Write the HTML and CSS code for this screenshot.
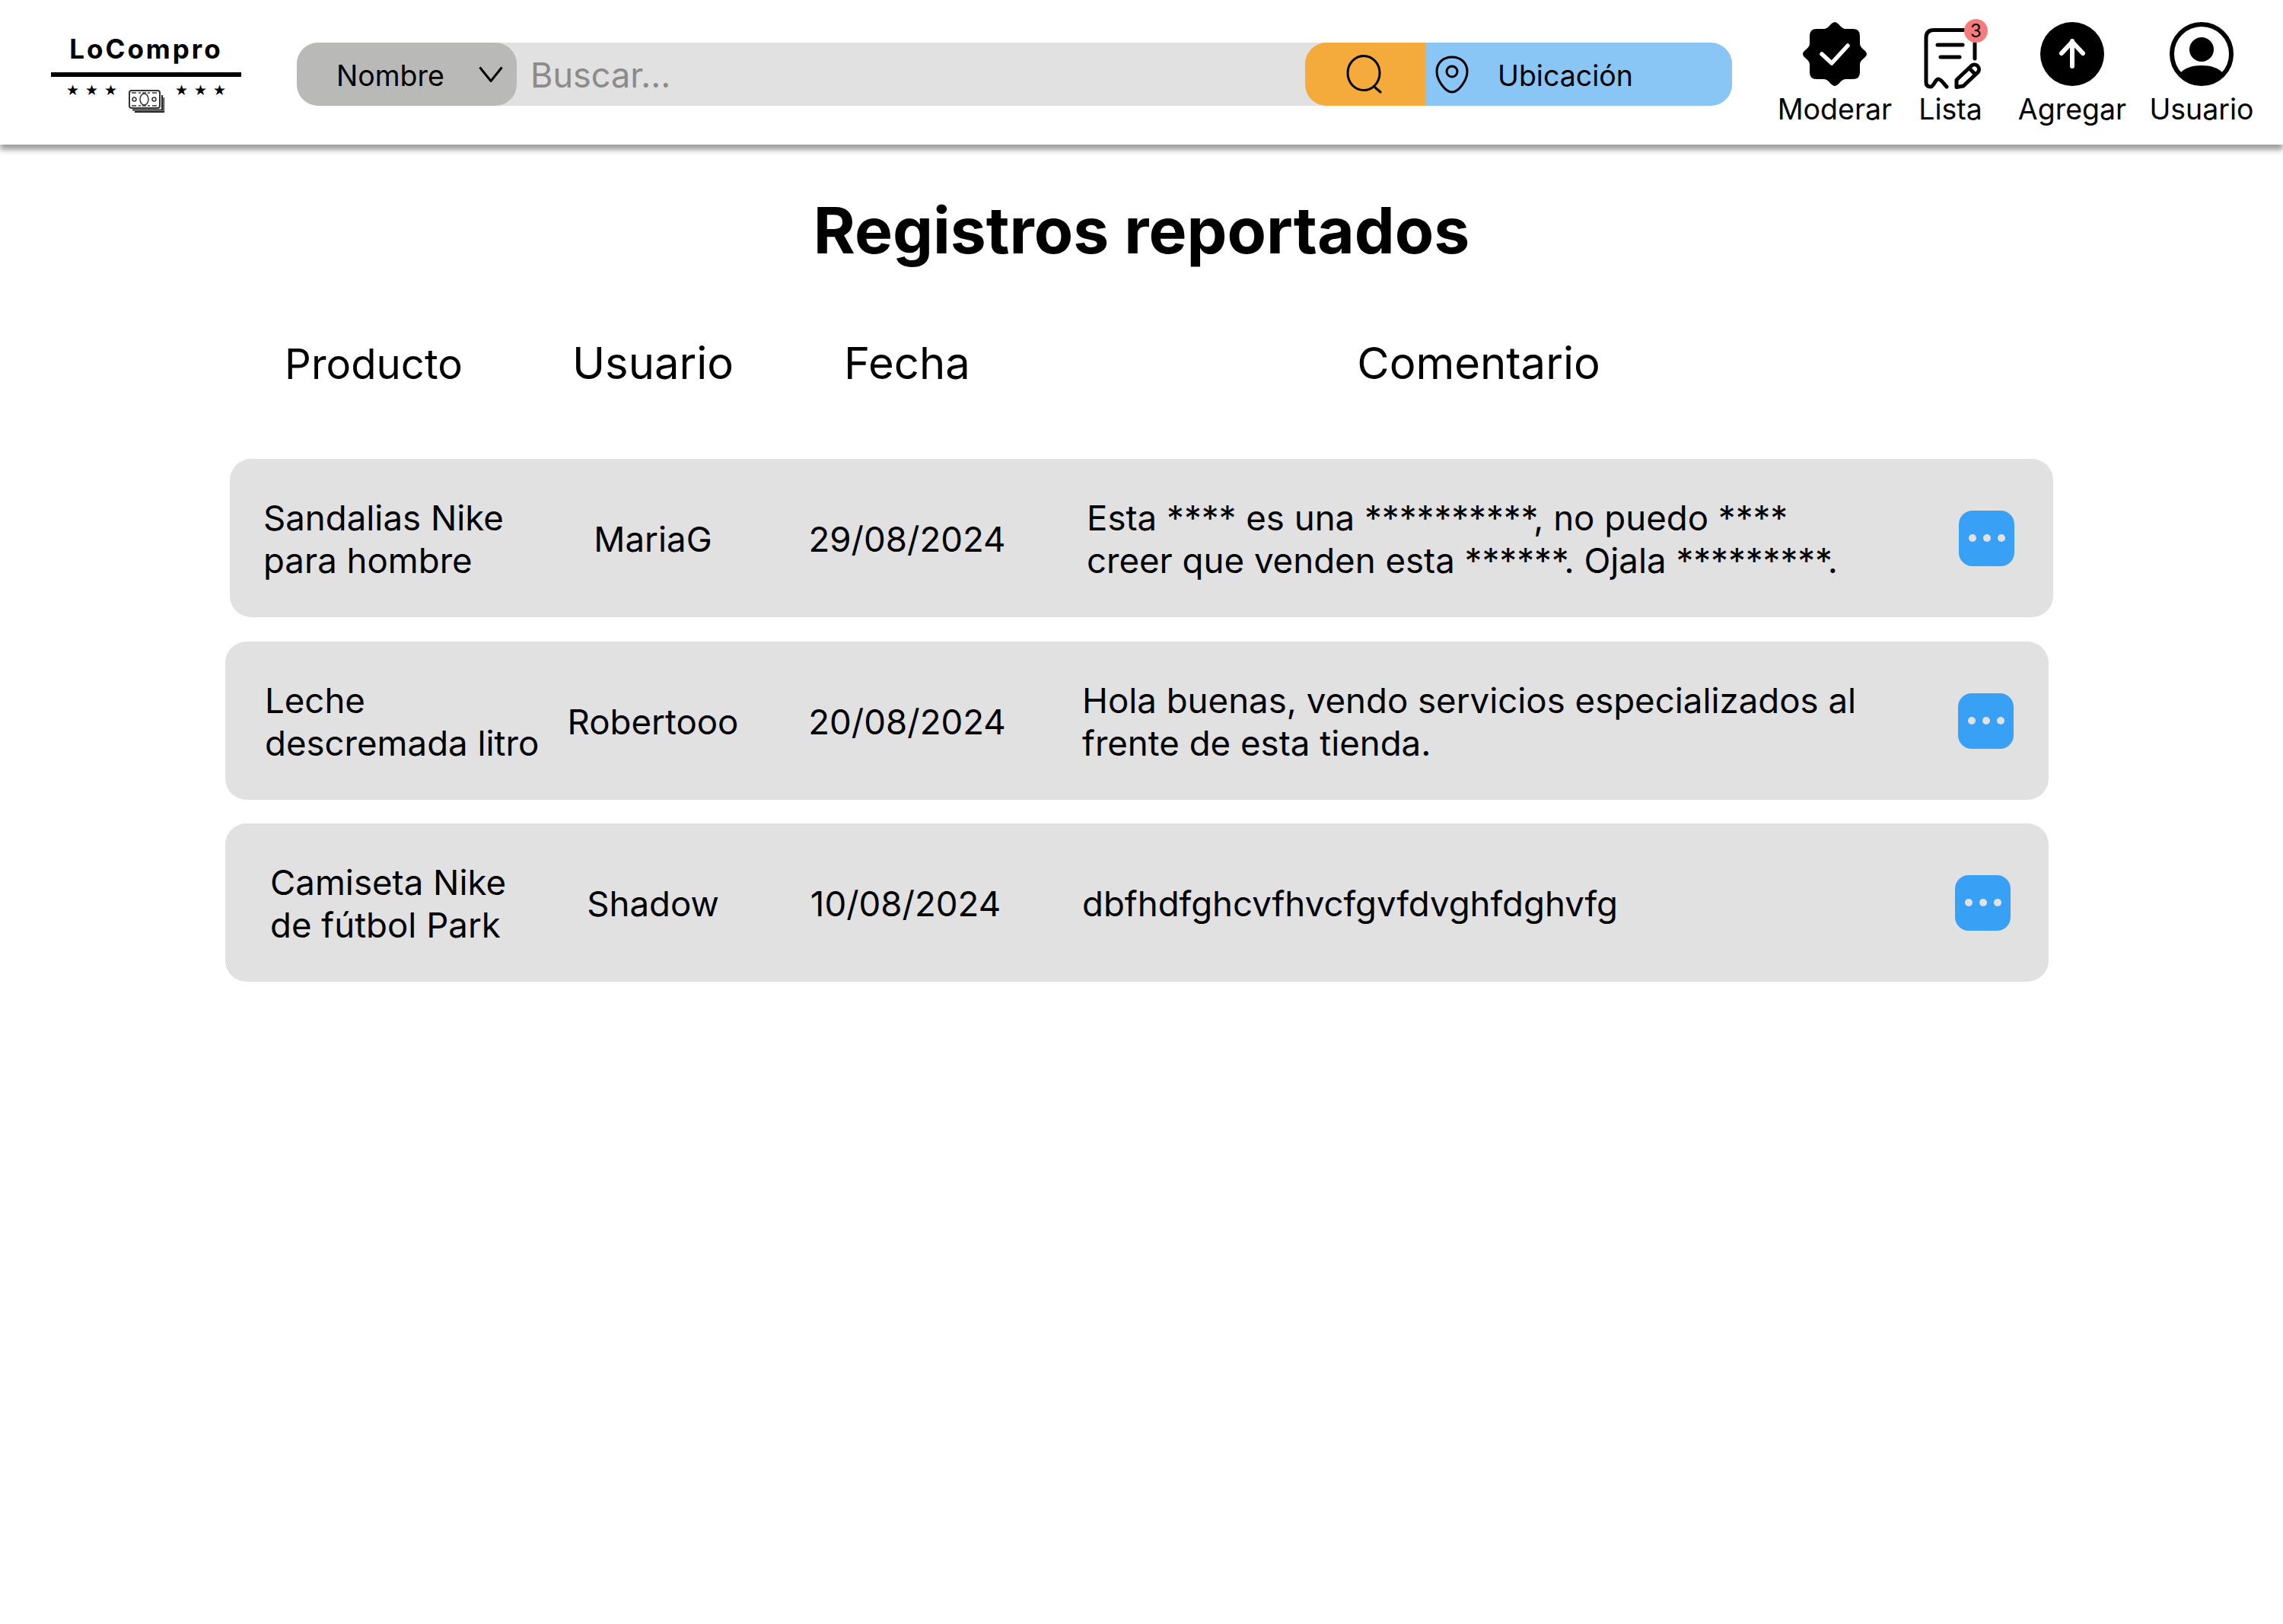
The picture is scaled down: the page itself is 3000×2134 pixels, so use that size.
FILE: index.html
```html
<!DOCTYPE html>
<html lang="es">
<head>
<meta charset="utf-8">
<title>Registros reportados</title>
<link rel="stylesheet" href="styles.css">
</head>
<body>
<header class="topbar">
  <div class="logo">
    <div class="logo-name">LoCompro</div>
    <div class="logo-rule"></div>
    <div class="logo-marks">
      <span class="stars">★★★</span>
      <svg class="logo-money" viewBox="0 0 47 30">
        <path class="money-back" d="M5 26.500H44V7"/>
        <path class="money-back" d="M8 29H46.500V10"/>
        <rect class="money-front" x="1" y="1" width="40" height="23" rx="3"/>
        <ellipse class="money-thin" cx="20.500" cy="12.500" rx="5.500" ry="7.500"/>
        <circle class="money-thin" cx="7.500" cy="12.500" r="2.500"/>
        <circle class="money-thin" cx="33.500" cy="12.500" r="2.500"/>
        <path class="money-thin" d="M4 4h6M13 4h3M18 4h5M25 4h3M31 4h6M4 21h6M13 21h3M18 21h5M25 21h3M31 21h6"/>
      </svg>
      <span class="stars">★★★</span>
    </div>
  </div>
  <div class="search">
    <div class="search-type">
      <span>Nombre</span>
      <svg class="chevron" viewBox="0 0 32 21"><path d="M1.500 1.500L16 19.500L30.500 1.500"/></svg>
    </div>
    <div class="search-input">Buscar...</div>
    <div class="search-go">
      <svg class="lens" viewBox="0 0 50 52"><ellipse cx="23" cy="24" rx="21" ry="22.500"/><path d="M38 43L45 49"/></svg>
    </div>
    <div class="search-place">
      <svg class="pin" viewBox="0 0 44 50"><path d="M22 2C10 2 2 10 2 21C2 32 13 48 22 48C31 48 42 32 42 21C42 10 34 2 22 2Z"/><ellipse cx="22" cy="21" rx="7" ry="7"/></svg>
      <span>Ubicación</span>
    </div>
  </div>
  <nav class="actions">
    <div class="action">
      <svg class="action-icon" viewBox="0 0 84 84">
        <path class="solid" d="M42 0C47 0 50 9 56 9H66Q75 9 75 18V28C75 35 84 37 84 42C84 47 75 49 75 56V66Q75 75 66 75H56C50 75 47 84 42 84C37 84 34 75 28 75H18Q9 75 9 66V56C9 49 0 47 0 42C0 37 9 35 9 28V18Q9 9 18 9H28C34 9 37 0 42 0Z"/>
        <path class="white-line check" d="M25 42L38 54L59 31"/>
      </svg>
      <span>Moderar</span>
    </div>
    <div class="action action-list">
      <svg class="action-icon" viewBox="0 0 84 84">
        <path class="black-line thin" d="M61 10.500H20Q10 10.500 10 20.500V79Q10 85 16 85C20 85 22 75 26 75C30 75 33 81 37 85"/>
        <path class="black-line thin" d="M25 30H58M29 46H54M74 28V48"/>
        <path class="black-line thin" d="M50 76L69 58A6 6 0 0 1 78 66L59 84L50 85.500Z"/>
        <path class="black-line thin" d="M67 61L74 68"/>
      </svg>
      <span class="count">3</span>
      <span>Lista</span>
    </div>
    <div class="action">
      <svg class="action-icon" viewBox="0 0 84 84">
        <circle class="solid" cx="42" cy="42" r="42"/>
        <path class="white-line" d="M42 25V58M28 41L42 26L56 41"/>
      </svg>
      <span>Agregar</span>
    </div>
    <div class="action">
      <svg class="action-icon" viewBox="0 0 84 84">
        <circle class="black-line" cx="42" cy="42" r="39"/>
        <ellipse class="solid" cx="42" cy="36" rx="16" ry="16"/>
        <path class="solid" d="M14 67C20 60 30 57 42 57C54 57 64 60 70 67A38 38 0 0 1 14 67Z"/>
      </svg>
      <span>Usuario</span>
    </div>
  </nav>
</header>
<main class="content">
  <h1 class="title">Registros reportados</h1>
  <div class="columns">
    <div class="col-product">Producto</div>
    <div>Usuario</div>
    <div>Fecha</div>
    <div>Comentario</div>
  </div>
  <div class="rows">
    <article class="row row-a">
      <div>Sandalias Nike<br>para hombre</div>
      <div class="center">MariaG</div>
      <div class="center">29/08/2024</div>
      <div class="comment">Esta **** es una **********, no puedo ****<br>creer que venden esta ******. Ojala *********.</div>
      <button class="more"><i></i><i></i><i></i></button>
    </article>
    <article class="row row-b">
      <div>Leche<br>descremada litro</div>
      <div class="center">Robertooo</div>
      <div class="center">20/08/2024</div>
      <div class="comment">Hola buenas, vendo servicios especializados al<br>frente de esta tienda.</div>
      <button class="more"><i></i><i></i><i></i></button>
    </article>
    <article class="row row-c">
      <div>Camiseta Nike<br>de fútbol Park</div>
      <div class="center">Shadow</div>
      <div class="center date-c">10/08/2024</div>
      <div class="comment">dbfhdfghcvfhvcfgvfdvghfdghvfg</div>
      <button class="more"><i></i><i></i><i></i></button>
    </article>
  </div>
</main>
</body>
</html>
```
FILE: styles.css
```css
* { box-sizing: border-box; }
html, body { margin: 0; background: #fff; }
body { font-family: Inter, "Liberation Sans", sans-serif; color: #000; width: 3000px; min-height: 2134px; }

.topbar {
  height: 190px;
  display: flex;
  align-items: flex-start;
  padding-left: 67px;
  background: #fff;
  box-shadow: 0 7px 7px rgba(0,0,0,.38);
  position: relative;
}

.logo { width: 250px; margin-top: 43px; display: flex; flex-direction: column; }
.logo-name { font-family: Inter, sans-serif; font-weight: 700; font-size: 35px; line-height: 42px; letter-spacing: 3px; text-align: center; }
.logo-rule { height: 6px; background: #000; margin-top: 10px; }
.logo-marks { display: flex; justify-content: space-between; padding: 0 20px; margin-top: 5px; }
.stars { font-family: "DejaVu Sans", sans-serif; font-size: 19px; line-height: 24px; letter-spacing: 8px; margin-right: -8px; }
.logo-money { width: 47px; height: 30px; margin-top: 12px; margin-right: 0; }
.money-front { fill: #fff; stroke: #333; stroke-width: 2; }
.money-back { fill: none; stroke: #222; stroke-width: 2; }
.money-thin { fill: none; stroke: #333; stroke-width: 1.500; }

.search {
  margin: 56px 0 0 73px;
  width: 1886px;
  height: 83px;
  display: flex;
  background: #e1e1e1;
  border-radius: 28px;
  font-size: 37.500px;
}
.search-type {
  width: 289px;
  padding: 0 18px 0 52px;
  background: #b9b9b7;
  border-radius: 28px;
  display: flex;
  align-items: center;
  justify-content: space-between;
}
.search-type span { padding-top: 4px; }
.chevron { width: 32px; height: 21px; fill: none; stroke: #000; stroke-width: 3; }
.search-input { flex: 1; padding-left: 18px; font-size: 45px; line-height: 85px; color: #8b8b8b; }
.search-go {
  width: 158px;
  background: #f4ab3c;
  border-radius: 28px 0 0 28px;
  display: flex;
  align-items: center;
  justify-content: center;
}
.lens { width: 50px; height: 52px; fill: none; stroke: #000; stroke-width: 3; stroke-linecap: round; }
.search-place {
  width: 403px;
  padding-left: 13px;
  background: #89c6f6;
  border-radius: 0 28px 28px 0;
  display: flex;
  align-items: center;
  gap: 38px;
}
.search-place span { padding-top: 4px; }
.pin { width: 44px; height: 50px; fill: none; stroke: #000; stroke-width: 3; }

.actions {
  margin-left: 54px;
  display: grid;
  grid-template-columns: 162px 142px 178px 162px;
  padding-top: 29px;
  font-size: 37.500px;
}
.action { display: flex; flex-direction: column; align-items: center; position: relative; line-height: 48px; }
.action-icon { width: 84px; height: 84px; margin-bottom: 7px; overflow: visible; }
.solid { fill: #000; }
.white-line { fill: none; stroke: #fff; stroke-width: 6; stroke-linecap: round; stroke-linejoin: round; }
.white-line.check { stroke-width: 5.500; }
.black-line { fill: none; stroke: #000; stroke-width: 6; stroke-linecap: round; stroke-linejoin: round; }
.black-line.thin { stroke-width: 5; }
.count {
  position: absolute;
  top: -4px;
  left: 89px;
  width: 31px;
  height: 31px;
  border-radius: 50%;
  background: #f47c7c;
  font-size: 24px;
  line-height: 31px;
  text-align: center;
}

.content { padding-top: 64px; }
.title { margin: 0; text-align: center; font-size: 84px; line-height: 98px; font-weight: 700; letter-spacing: 0; }
.columns {
  margin: 89px 0 0 252px;
  display: grid;
  grid-template-columns: 478px 256px 412px 1090px;
  align-items: baseline;
  font-size: 58px;
  line-height: 72px;
  text-align: center;
}
.col-product { font-size: 54.500px; }
.rows { margin: 89px 0 0 296px; display: flex; flex-direction: column; gap: 32px; width: 2401px; }
.row {
  height: 208px;
  width: 2396px;
  display: grid;
  grid-template-columns: var(--first) 256px 412px 1fr 73px;
  align-items: center;
  background: #e1e1e1;
  border-radius: 28px;
  font-size: 45.600px;
  line-height: 56px;
  padding-left: var(--pad);
  padding-right: var(--end);
}
.row > div { padding-top: 3px; }
.row-a { --first: 384px; --pad: 44px; --end: 51px; margin-left: 6px; }
.row-b { --first: 382px; --pad: 52px; --end: 46px; }
.row-c { --first: 375px; --pad: 59px; --end: 50px; margin-top: -1px; }
.center { text-align: center; }
.date-c { margin-right: 4px; }
.comment { padding-left: 24px; }
.row-a .comment { padding-left: 30px; }
.more {
  width: 73px;
  height: 73px;
  padding: 0;
  border: 0;
  border-radius: 18px;
  background: #38a1f5;
  display: flex;
  align-items: center;
  justify-content: center;
  gap: 9px;
}
.more i { width: 10px; height: 10px; border-radius: 50%; background: #e1e1e1; }
```
